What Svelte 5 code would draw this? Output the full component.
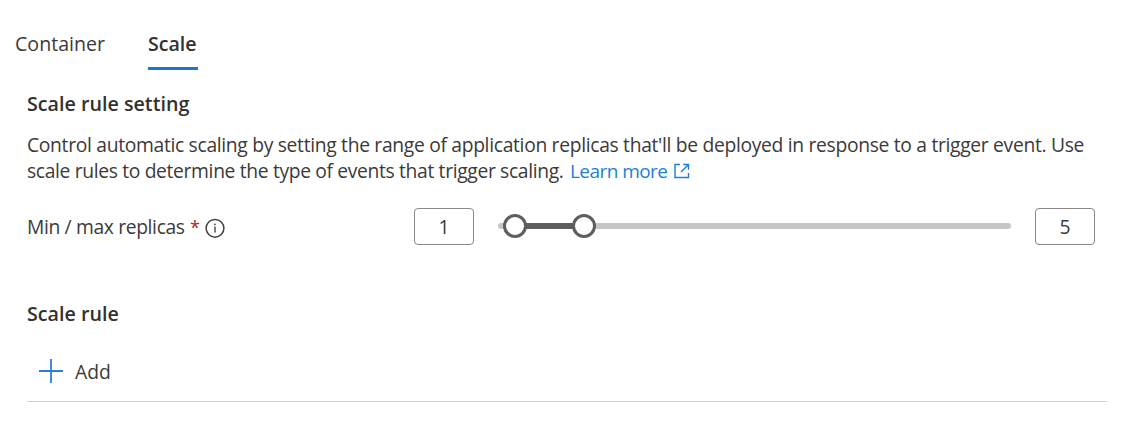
<script>
  const min = 1;
  const max = 5;
  const position = (value) => 17 + (value - 1) * 17.25;
</script>

<main>
  <nav>
    <button class="tab container-tab">Container</button>
    <button class="tab selected">Scale</button>
  </nav>
  <section>
    <h2 class="setting">Scale rule setting</h2>
    <p>
      <span class="line first">Control automatic scaling by setting the range of application replicas that'll be deployed in response to a trigger event. Use</span>
      <span class="line second"><span class="sentence">scale rules to determine the type of events that trigger scaling.</span><a href="#learn"><span class="learn">Learn more</span><svg width="16" height="16" viewBox="0 0 16 16" fill="none" stroke="currentColor" stroke-width="1.4"><path d="M6 1.5H1v13h13.5V10M9.2 1.5h5.3v5.3M14.3 1.7 7 9" /></svg></a></span>
    </p>
    <div class="replicas">
      <div class="label">
        <span class="name">Min / max replicas</span><span class="required">*</span>
        <svg width="20" height="20" viewBox="0 0 20 20" fill="none" stroke="#424140"><circle cx="10" cy="10.3" r="8.9" stroke-width="1.5" /><path d="M10 8.5v6" stroke-width="1.4" /><circle cx="10" cy="6.3" r=".9" fill="#424140" stroke="none" /></svg>
      </div>
      <div class="value">{min}</div>
      <div class="track">
        <div class="range" style="left: {position(min)}px; width: {position(max) - position(min)}px"></div>
        <div class="thumb" style="left: {position(min)}px"></div>
        <div class="thumb" style="left: {position(max)}px"></div>
      </div>
      <div class="value">{max}</div>
    </div>
    <h2 class="rule">Scale rule</h2>
    <div class="commands">
      <button class="add"><svg width="24" height="24" viewBox="0 0 24 24" stroke="#2b7fd4" stroke-width="1.8"><path d="M12 0v24M0 12h24" /></svg><span>Add</span></button>
    </div>
  </section>
</main>

<style>
  :global(body) { background: #fff; }
  main {
    height: 425px;
    box-sizing: border-box;
    padding-top: 24px;
    color: #3b3a39;
    font: 19.3px/26px "Open Sans", "Noto Sans", sans-serif;
  }
  button {
    padding: 0;
    border: 0;
    background: none;
    color: inherit;
    font: inherit;
  }
  nav { display: flex; gap: 43px; height: 46px; padding-left: 15px; }
  .tab {
    display: flex;
    align-items: flex-start;
    box-sizing: border-box;
    height: 46px;
    padding-top: 7px;
    font-size: 19.6px;
    white-space: nowrap;
  }
  .container-tab { width: 90px; }
  .selected {
    width: 50px;
    border-bottom: 3px solid #1b76d1;
    color: #323130;
    font-weight: 600;
  }
  section { padding: 0 24px 0 27px; }
  h2 {
    margin: 0;
    color: #323130;
    font-size: 19.7px;
    line-height: 26px;
    font-weight: 600;
  }
  .setting { margin-top: 21px; }
  p { margin: 15px 0 0; }
  .line { display: flex; height: 26px; white-space: nowrap; }
  .first { letter-spacing: -0.32px; }
  .second { letter-spacing: -0.35px; }
  .sentence { width: 543px; }
  a { display: flex; color: #1b7fd9; text-decoration: none; }
  .learn { width: 104px; font-size: 19px; letter-spacing: -0.55px; }
  a svg { margin-top: 5px; }
  .replicas { display: flex; align-items: center; height: 37px; margin-top: 24px; }
  .label { display: flex; align-items: center; width: 387px; white-space: nowrap; }
  .name { width: 163px; letter-spacing: -0.36px; }
  .required { width: 15px; color: #a4262c; font-size: 18px; }
  .label svg { margin-top: 3px; }
  .value {
    box-sizing: border-box;
    width: 60px;
    height: 37px;
    border: 1px solid #8a8886;
    border-radius: 4px;
    line-height: 36px;
    text-align: center;
  }
  .track {
    position: relative;
    width: 513px;
    height: 6px;
    margin: 0 24px 1px;
    border-radius: 3px;
    background: #c8c6c4;
  }
  .range { position: absolute; top: 0; height: 6px; background: #605e5c; }
  .thumb {
    position: absolute;
    top: -9px;
    box-sizing: border-box;
    width: 24px;
    height: 24px;
    margin-left: -12px;
    border: 3px solid #605e5c;
    border-radius: 50%;
    background: #fff;
  }
  .rule { margin-top: 56px; }
  .commands { height: 74px; border-bottom: 1px solid #d2d0ce; }
  .add { display: flex; align-items: center; gap: 12px; padding: 32px 0 0 12px; }
  .add svg { margin-top: -2px; }
</style>
